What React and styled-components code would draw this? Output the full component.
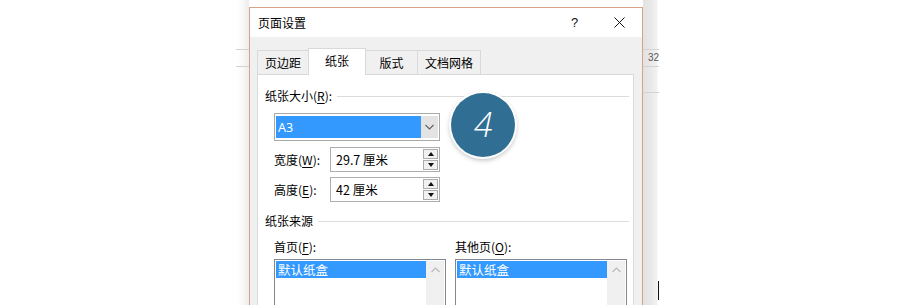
import React from 'react';
import styled, { createGlobalStyle } from 'styled-components';

const GlobalStyle = createGlobalStyle`
  html, body {
    margin: 0;
    padding: 0;
    background: #fff;
  }
  body {
    font-family: "Noto Sans CJK SC", "Noto Sans", sans-serif;
    font-size: 12px;
    color: #000;
  }
`;

const Stage = styled.div`
  display: flex;
  height: 305px;
  overflow: hidden;
  padding-left: 236px;
  background: #fff;
`;

// the document window peeking out behind the dialog
const Strip = styled.div`
  width: ${p => p.$width}px;
  flex-shrink: 0;
  display: flex;
  flex-direction: column;
  background: ${p => p.$side === 'left'
    ? 'linear-gradient(to right, #fff 0, #fafafa 6px, #ececec 13px)'
    : 'linear-gradient(to right, #e2e2e2 0, #e9e9e9 8px, #f2f2f2 14px, #fff 15px)'};
`;

const RulerCell = styled.div`
  height: ${p => p.$h}px;
  border-bottom: 1px solid #d2d2d2;
  font-family: "Liberation Sans", Arial, sans-serif;
  font-size: 10px;
  line-height: ${p => p.$h}px;
  color: #5a5a5a;
  padding-left: 5px;
  overflow: hidden;
  white-space: nowrap;
`;

const Caret = styled.div`
  width: 1px;
  height: 19px;
  background: #111;
  margin-top: auto;
  margin-bottom: 5px;
  align-self: flex-end;
`;

const Dialog = styled.div`
  width: 394px;
  flex-shrink: 0;
  margin-top: 7px;
  box-sizing: border-box;
  border: 1px solid #d7a387;
  border-bottom: none;
  background: #f0f0f0;
  display: flex;
  flex-direction: column;
`;

const TitleBar = styled.div`
  height: 29px;
  background: #fff;
  display: flex;
  align-items: center;
  padding-left: 8px;
`;

const Title = styled.div`
  flex: 1;
  line-height: 16px;
`;

const TitleButton = styled.div`
  width: 45px;
  height: 29px;
  display: flex;
  align-items: center;
  justify-content: center;
  font-family: "Liberation Sans", Arial, sans-serif;
  font-size: 13px;
  color: #111;
`;

const Body = styled.div`
  flex: 1;
  padding: 11px 8px 0 7px;
  display: flex;
  flex-direction: column;
`;

const TabStrip = styled.div`
  display: flex;
  align-items: flex-start;
  height: 27px;
  margin-bottom: -1px;
  position: relative;
  z-index: 1;
`;

const Tab = styled.div`
  width: ${p => p.$w}px;
  height: ${p => (p.$active ? 27 : 24)}px;
  margin-top: ${p => (p.$active ? 0 : 2)}px;
  margin-left: ${p => (p.$first ? 0 : -1)}px;
  box-sizing: border-box;
  border: 1px solid #d9d9d9;
  border-bottom: none;
  background: ${p => (p.$active ? '#fff' : '#f0f0f0')};
  position: relative;
  z-index: ${p => (p.$active ? 2 : 1)};
  display: flex;
  align-items: center;
  justify-content: center;
  padding-bottom: ${p => (p.$active ? 2 : 0)}px;
  line-height: 16px;
`;

const Panel = styled.div`
  flex: 1;
  position: relative;
  background: #fff;
  border: 1px solid #d9d9d9;
  padding: 13px 4px 0 7px;
  display: flex;
  flex-direction: column;
`;

const GroupHeader = styled.div`
  display: flex;
  align-items: center;
  gap: 5px;
  height: 16px;
  line-height: 16px;
  margin-top: ${p => p.$top || 0}px;
  &::after {
    content: '';
    flex: 1;
    border-top: 1px solid #dcdcdc;
  }
`;

const Key = styled.span`
  text-decoration: underline;
  text-underline-offset: 2px;
`;

const Indent = styled.div`
  padding-left: 9px;
  display: flex;
  flex-direction: column;
`;

const Combo = styled.div`
  width: 166px;
  height: 28px;
  margin-top: 9px;
  box-sizing: border-box;
  border: 1px solid #a9a9a9;
  padding: 2px 1px 2px 1px;
  display: flex;
  background: #fff;
`;

const Selection = styled.div`
  flex: 1;
  background: #3399ff;
  color: #fff;
  padding-left: 2px;
  display: flex;
  align-items: center;
  font-family: "Noto Sans", "Noto Sans CJK SC", sans-serif;
  font-size: 12.5px;
`;

const DropButton = styled.div`
  width: 17px;
  background: #e3e3e3;
  display: flex;
  align-items: center;
  justify-content: center;
`;

const SpinRow = styled.div`
  display: flex;
  align-items: center;
  margin-top: ${p => p.$top}px;
`;

const SpinLabel = styled.div`
  width: 56px;
  line-height: 16px;
`;

const SpinBox = styled.div`
  width: 110px;
  height: 25px;
  box-sizing: border-box;
  border: 1px solid #abadb3;
  display: flex;
  padding: 1px;
`;

const SpinText = styled.div`
  flex: 1;
  padding-left: 4px;
  display: flex;
  align-items: center;
  font-size: 12.5px;
`;

const SpinButtons = styled.div`
  width: 15px;
  display: flex;
  flex-direction: column;
  gap: 1px;
`;

const SpinButton = styled.div`
  flex: 1;
  box-sizing: border-box;
  border: 1px solid #acacac;
  background: #f1f1f1;
  display: flex;
  align-items: center;
  justify-content: center;
`;

const Arrow = styled.span`
  width: 0;
  height: 0;
  border-left: 3px solid transparent;
  border-right: 3px solid transparent;
  ${p => (p.$dir === 'up'
    ? 'border-bottom: 4px solid #111;'
    : 'border-top: 4px solid #111;')}
`;

const SourceGrid = styled.div`
  display: grid;
  grid-template-columns: 172px 172px;
  column-gap: 9px;
  margin-top: 10px;
`;

const SourceColumn = styled.div`
  display: flex;
  flex-direction: column;
`;

const FieldLabel = styled.div`
  line-height: 16px;
`;

const ListBox = styled.div`
  margin-top: 4px;
  height: 70px;
  box-sizing: border-box;
  border: 1px solid #828790;
  display: flex;
  padding: 1px;
  background: #fff;
`;

const ListArea = styled.div`
  flex: 1;
`;

const ListItem = styled.div`
  height: 17px;
  background: ${p => (p.$selected ? '#3399ff' : 'transparent')};
  color: ${p => (p.$selected ? '#fff' : '#000')};
  padding-left: 2px;
  line-height: 17px;
  font-size: 12.5px;
`;

const ScrollBar = styled.div`
  width: 18px;
  background: #f0f0f0;
  display: flex;
  justify-content: center;
  padding-top: 6px;
`;

const Badge = styled.div`
  position: absolute;
  left: 193px;
  top: 18px;
  width: 64px;
  height: 64px;
  border-radius: 50%;
  background: #306e94;
  box-shadow: 0 0 0 2px rgba(255, 255, 255, 0.95), 0 2px 5px 1px rgba(0, 0, 0, 0.28);
  display: flex;
  align-items: center;
  justify-content: center;
  color: #fff;
  font-family: "Open Sans", "Noto Sans", sans-serif;
  font-style: italic;
  font-weight: 300;
  font-size: 34px;
  line-height: 1;
  padding-bottom: 2px;
  box-sizing: border-box;
`;

const Chevron = ({ up }) => (
  <svg width="9" height="6" viewBox="0 0 9 6">
    <path
      d={up ? 'M0.5 5 L4.5 1 L8.5 5' : 'M0.5 1 L4.5 5 L8.5 1'}
      fill="none"
      stroke={up ? '#b8b8b8' : '#606060'}
      strokeWidth="1.1"
    />
  </svg>
);

const CloseIcon = () => (
  <svg width="11" height="11" viewBox="0 0 11 11">
    <path d="M0.5 0.5 L10.5 10.5 M10.5 0.5 L0.5 10.5" stroke="#111" strokeWidth="1" />
  </svg>
);

const tabs = [
  { label: '页边距', w: 52 },
  { label: '纸张', w: 58, active: true },
  { label: '版式', w: 53 },
  { label: '文档网格', w: 64 },
];

const sizes = [
  { label: '宽度', key: 'W', value: '29.7 厘米', top: 6 },
  { label: '高度', key: 'E', value: '42 厘米', top: 5 },
];

const sources = [
  { label: '首页', key: 'F' },
  { label: '其他页', key: 'O' },
];

export default function App() {
  return (
    <>
      <GlobalStyle />
      <Stage>
        <Strip $side="left" $width={13}>
          <RulerCell $h={49} />
          <RulerCell $h={16} />
        </Strip>

        <Dialog>
          <TitleBar>
            <Title>页面设置</Title>
            <TitleButton>?</TitleButton>
            <TitleButton><CloseIcon /></TitleButton>
          </TitleBar>

          <Body>
            <TabStrip>
              {tabs.map((t, i) => (
                <Tab key={t.label} $w={t.w} $active={t.active} $first={i === 0}>
                  {t.label}
                </Tab>
              ))}
            </TabStrip>

            <Panel>
              <GroupHeader>
                <span>纸张大小(<Key>R</Key>):</span>
              </GroupHeader>
              <Indent>
                <Combo>
                  <Selection>A3</Selection>
                  <DropButton><Chevron /></DropButton>
                </Combo>
                {sizes.map(s => (
                  <SpinRow key={s.key} $top={s.top}>
                    <SpinLabel>{s.label}(<Key>{s.key}</Key>):</SpinLabel>
                    <SpinBox>
                      <SpinText>{s.value}</SpinText>
                      <SpinButtons>
                        <SpinButton><Arrow $dir="up" /></SpinButton>
                        <SpinButton><Arrow $dir="down" /></SpinButton>
                      </SpinButtons>
                    </SpinBox>
                  </SpinRow>
                ))}
              </Indent>

              <GroupHeader $top={11}>
                <span>纸张来源</span>
              </GroupHeader>
              <Indent>
                <SourceGrid>
                  {sources.map(s => (
                    <SourceColumn key={s.key}>
                      <FieldLabel>{s.label}(<Key>{s.key}</Key>):</FieldLabel>
                      <ListBox>
                        <ListArea>
                          <ListItem $selected>默认纸盒</ListItem>
                        </ListArea>
                        <ScrollBar><Chevron up /></ScrollBar>
                      </ListBox>
                    </SourceColumn>
                  ))}
                </SourceGrid>
              </Indent>

              <Badge>4</Badge>
            </Panel>
          </Body>
        </Dialog>

        <Strip $side="right" $width={16}>
          <RulerCell $h={49} />
          <RulerCell $h={16}>32</RulerCell>
          <RulerCell $h={25} />
          <Caret />
        </Strip>
      </Stage>
    </>
  );
}
